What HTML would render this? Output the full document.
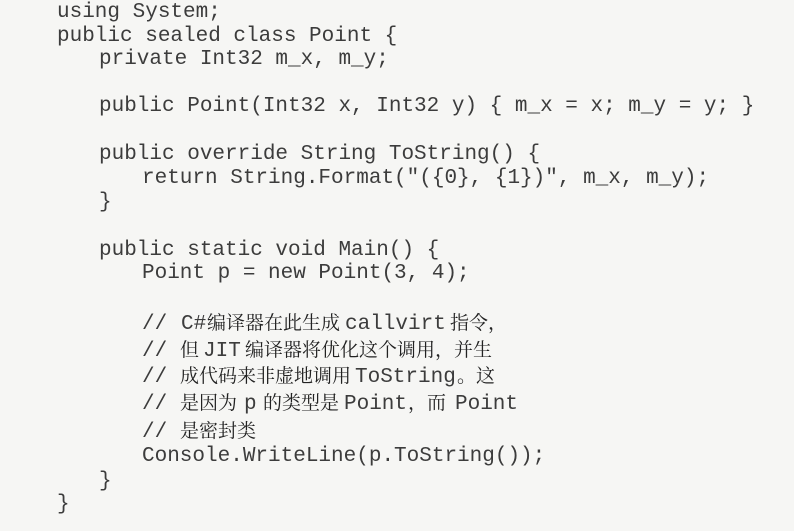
<!DOCTYPE html>
<html><head><meta charset="utf-8"><style>
html,body{margin:0;padding:0}
body{width:794px;height:531px;background:#f6f6f4;position:relative;overflow:hidden}
.l{position:absolute;white-space:pre;font-family:"Liberation Mono",monospace;font-size:21px;line-height:24px;color:#3c3c3c}
.c{position:absolute;white-space:pre;font-family:"Noto Serif CJK SC","Liberation Serif",serif;font-size:19px;line-height:24px;color:#222;margin-top:-3px}
</style></head><body>
<div class="l" style="left:57px;top:1px">using System;</div>
<div class="l" style="left:57px;top:25px">public sealed class Point {</div>
<div class="l" style="left:99px;top:48px">private Int32 m_x, m_y;</div>
<div class="l" style="left:99px;top:95px">public Point(Int32 x, Int32 y) { m_x = x; m_y = y; }</div>
<div class="l" style="left:99px;top:143px">public override String ToString() {</div>
<div class="l" style="left:142px;top:167px">return String.Format("({0}, {1})", m_x, m_y);</div>
<div class="l" style="left:99px;top:191px">}</div>
<div class="l" style="left:99px;top:239px">public static void Main() {</div>
<div class="l" style="left:142px;top:262px">Point p = new Point(3, 4);</div>

<div class="l" style="left:142px;top:313px">//</div>
<div class="l" style="left:181px;top:313px">C#</div>
<div class="c" style="left:207px;top:313px">编译器在此生成</div>
<div class="l" style="left:345px;top:313px">callvirt</div>
<div class="c" style="left:450px;top:313px">指令，</div>

<div class="l" style="left:142px;top:340px">//</div>
<div class="c" style="left:180px;top:340px">但</div>
<div class="l" style="left:203px;top:340px">JIT</div>
<div class="c" style="left:245px;top:340px">编译器将优化这个调用，并生</div>

<div class="l" style="left:142px;top:366px">//</div>
<div class="c" style="left:180px;top:366px">成代码来非虚地调用</div>
<div class="l" style="left:355px;top:366px">ToString</div>
<div class="c" style="left:457px;top:366px">。这</div>

<div class="l" style="left:142px;top:393px">//</div>
<div class="c" style="left:180px;top:393px">是因为</div>
<div class="l" style="left:244px;top:393px">p</div>
<div class="c" style="left:263px;top:393px">的类型是</div>
<div class="l" style="left:344px;top:393px">Point</div>
<div class="c" style="left:408px;top:393px">，而</div>
<div class="l" style="left:455px;top:393px">Point</div>

<div class="l" style="left:142px;top:421px">//</div>
<div class="c" style="left:180px;top:421px">是密封类</div>

<div class="l" style="left:142px;top:445px">Console.WriteLine(p.ToString());</div>
<div class="l" style="left:99px;top:470px">}</div>
<div class="l" style="left:57px;top:493px">}</div>
</body></html>
